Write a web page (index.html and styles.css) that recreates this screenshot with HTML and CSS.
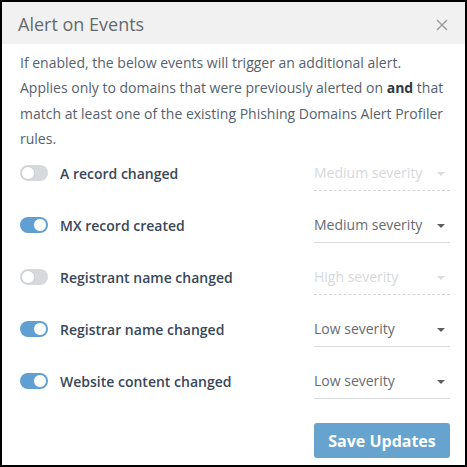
FILE: index.html
```html
<!DOCTYPE html>
<html>
<head>
<meta charset="utf-8">
<link rel="stylesheet" href="styles.css">
</head>
<body>
<div class="modal">
  <div class="header">
    <span class="title">Alert on Events</span>
    <svg class="close" width="12" height="12" viewBox="0 0 12 12"><path d="M1 1L11 11M11 1L1 11" stroke="#9a9a9a" stroke-width="1.4"/></svg>
  </div>
  <p class="desc">If enabled, the below events will trigger an additional alert. Applies only to domains that were previously alerted on <b>and</b> that match at least one of the existing Phishing Domains Alert Profiler rules.</p>
  <div class="rows">
    <div class="row">
      <span class="toggle"><span class="knob"></span></span>
      <span class="label">A record changed</span>
      <div class="select disabled"><span>Medium severity</span><span class="caret"></span></div>
    </div>
    <div class="row">
      <span class="toggle on"><span class="knob"></span></span>
      <span class="label">MX record created</span>
      <div class="select"><span>Medium severity</span><span class="caret"></span></div>
    </div>
    <div class="row">
      <span class="toggle"><span class="knob"></span></span>
      <span class="label">Registrant name changed</span>
      <div class="select disabled"><span>High severity</span><span class="caret"></span></div>
    </div>
    <div class="row">
      <span class="toggle on"><span class="knob"></span></span>
      <span class="label">Registrar name changed</span>
      <div class="select"><span>Low severity</span><span class="caret"></span></div>
    </div>
    <div class="row">
      <span class="toggle on"><span class="knob"></span></span>
      <span class="label">Website content changed</span>
      <div class="select"><span>Low severity</span><span class="caret"></span></div>
    </div>
  </div>
  <div class="footer">
    <button class="save">Save Updates</button>
  </div>
</div>
</body>
</html>
```
FILE: styles.css
```css
html, body { margin: 0; padding: 0; }
body {
  background: #000;
  width: 467px;
  height: 467px;
  padding: 2px;
  box-sizing: border-box;
  font-family: "Open Sans", "Noto Sans", sans-serif;
}
.modal {
  background: #fff;
  width: 463px;
  height: 463px;
  display: flex;
  flex-direction: column;
}
.header {
  background: #f1f1f1;
  height: 42px;
  box-sizing: border-box;
  display: flex;
  align-items: center;
  justify-content: space-between;
  padding: 2px 17px 0 16px;
  flex-shrink: 0;
}
.title {
  font-size: 18px;
  color: #666a6e;
}
.close { display: block; margin-top: 1px; }
.desc {
  margin: 6px 16px 0 18px;
  font-size: 14px;
  line-height: 25.3px;
  color: #55626e;
}
.desc b { color: #2e3a46; font-weight: 700; }
.rows {
  margin-top: -4px;
  display: flex;
  flex-direction: column;
}
.row {
  height: 52px;
  display: flex;
  align-items: center;
  padding-left: 18px;
}
.toggle {
  width: 28px;
  height: 16px;
  border-radius: 8px;
  background: #d6dadd;
  position: relative;
  flex-shrink: 0;
}
.toggle .knob {
  position: absolute;
  left: 1px;
  top: 1px;
  width: 14px;
  height: 14px;
  border-radius: 50%;
  background: #fff;
  box-sizing: border-box;
  border: 1px solid #c9cdd0;
}
.toggle.on { background: #5f9fd2; }
.toggle.on .knob { left: 13px; border-color: #5f9fd2; }
.label {
  margin-left: 12px;
  font-size: 14px;
  font-weight: 600;
  color: #38475a;
  flex: 1;
}
.select {
  width: 136px;
  height: 36px;
  margin-right: 15px;
  box-sizing: border-box;
  border-bottom: 1px solid #d8dadc;
  display: flex;
  align-items: center;
  justify-content: space-between;
  font-size: 14px;
  color: #676c72;
  padding-right: 5px;
}
.caret {
  width: 0;
  height: 0;
  border-left: 4px solid transparent;
  border-right: 4px solid transparent;
  border-top: 4px solid #5a5e62;
  margin-top: 2px;
}
.select.disabled {
  color: #d6d9dc;
  border-bottom: 1px dashed #d3d6d9;
}
.select.disabled .caret { border-top-color: #dadcde; }
.footer {
  display: flex;
  justify-content: flex-end;
  padding: 16px 15px 0 0;
}
.save {
  width: 136px;
  height: 35px;
  border: none;
  border-radius: 3px;
  background: #66a3cf;
  color: #fff;
  font-family: "Open Sans", "Noto Sans", sans-serif;
  font-weight: 700;
  font-size: 16px;
  padding: 0;
}
```
